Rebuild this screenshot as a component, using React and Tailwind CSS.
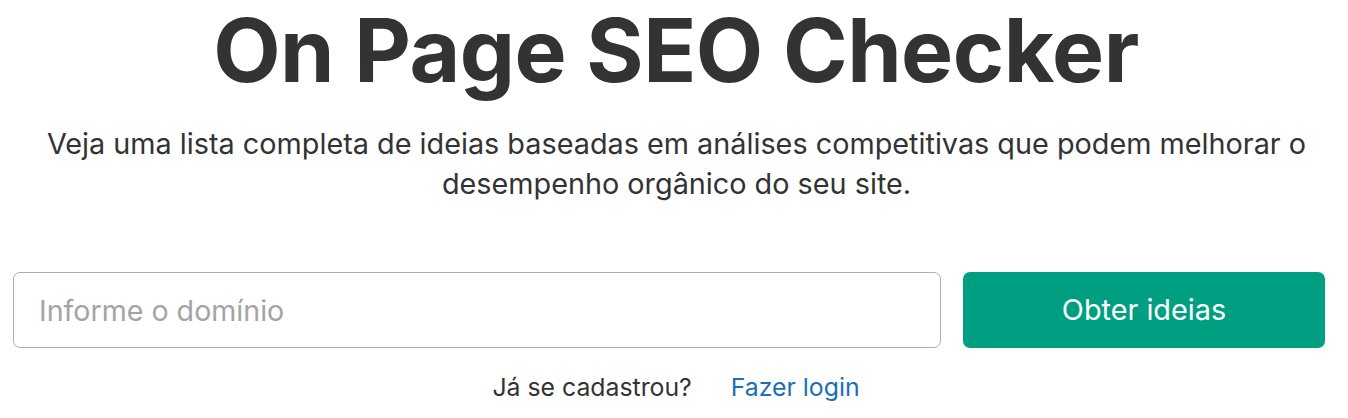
import React from 'react'

const App = () => {
  return (
    <div className="w-[1348px] h-[418px] bg-white overflow-hidden font-['Inter','Liberation_Sans',sans-serif] text-[#333]">
      <div className="flex flex-col items-center">
        <h1 className="pt-[2px] text-[87.5px] leading-[96px] font-bold tracking-[-0.5px] text-[#333] pl-[4px]">
          On Page SEO Checker
        </h1>
        <p className="mt-[26px] w-[1300px] text-center text-[28.8px] leading-[40px] text-[#333] pl-[5px]">
          Veja uma lista completa de ideias baseadas em análises competitivas que podem melhorar o desempenho orgânico do seu site.
        </p>
      </div>

      <div className="mt-[68px] flex gap-[22px] pl-[13px] pr-[23px]">
        <input
          type="text"
          placeholder="Informe o domínio"
          className="flex-1 h-[76px] rounded-[7px] border border-[#a6b0b0] px-[25px] text-[28.6px] text-[#333] placeholder:text-[#a4a4a4] outline-none"
        />
        <button className="w-[362px] h-[76px] rounded-[7px] bg-[#009f81] text-white text-[28.8px]">
          Obter ideias
        </button>
      </div>

      <div className="mt-[22px] flex justify-center gap-[39px] text-[24.8px] leading-[34px] pl-[4px]">
        <span className="text-[#333]">Já se cadastrou?</span>
        <a href="#" className="text-[#1a6fb8]">Fazer login</a>
      </div>
    </div>
  )
}

export default App
